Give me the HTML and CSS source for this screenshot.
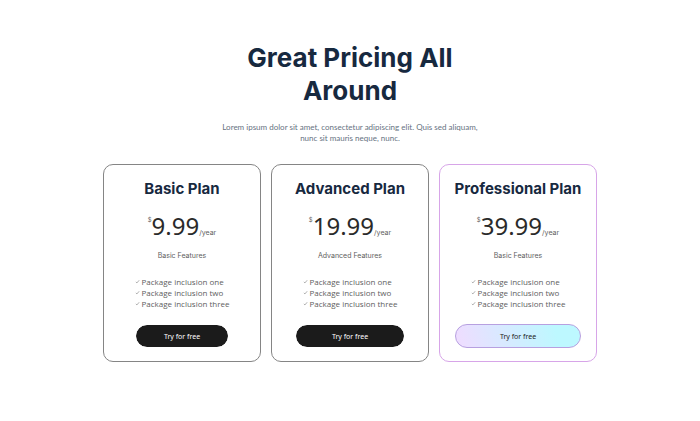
FILE: index.html
```html
<!DOCTYPE html>
<html lang="en">
<head>
<meta charset="utf-8">
<meta name="viewport" content="width=device-width, initial-scale=1">
<title>Pricing</title>
<link rel="stylesheet" href="styles.css">
</head>
<body>
<main class="pricing">
  <header class="intro">
    <h1>Great Pricing All Around</h1>
    <p>Lorem ipsum dolor sit amet, consectetur adipiscing elit. Quis sed aliquam, nunc sit mauris neque, nunc.</p>
  </header>
  <div class="plans">
    <section class="card">
      <div class="plan">
        <h2>Basic Plan</h2>
        <p class="price"><span class="currency">$</span><span class="amount">9.99</span><span class="period">/year</span></p>
        <p class="features">Basic Features</p>
        <ul>
          <li><svg viewBox="0 0 6 6"><path d="M1 3.5 2.3 4.7 5 1.5"/></svg>Package inclusion one</li>
          <li><svg viewBox="0 0 6 6"><path d="M1 3.5 2.3 4.7 5 1.5"/></svg>Package inclusion two</li>
          <li><svg viewBox="0 0 6 6"><path d="M1 3.5 2.3 4.7 5 1.5"/></svg>Package inclusion three</li>
        </ul>
        <button type="button">Try for free</button>
      </div>
    </section>
    <section class="card">
      <div class="plan">
        <h2>Advanced Plan</h2>
        <p class="price"><span class="currency">$</span><span class="amount">19.99</span><span class="period">/year</span></p>
        <p class="features">Advanced Features</p>
        <ul>
          <li><svg viewBox="0 0 6 6"><path d="M1 3.5 2.3 4.7 5 1.5"/></svg>Package inclusion one</li>
          <li><svg viewBox="0 0 6 6"><path d="M1 3.5 2.3 4.7 5 1.5"/></svg>Package inclusion two</li>
          <li><svg viewBox="0 0 6 6"><path d="M1 3.5 2.3 4.7 5 1.5"/></svg>Package inclusion three</li>
        </ul>
        <button type="button">Try for free</button>
      </div>
    </section>
    <section class="card card-pro">
      <div class="plan">
        <h2>Professional Plan</h2>
        <p class="price"><span class="currency">$</span><span class="amount">39.99</span><span class="period">/year</span></p>
        <p class="features">Basic Features</p>
        <ul>
          <li><svg viewBox="0 0 6 6"><path d="M1 3.5 2.3 4.7 5 1.5"/></svg>Package inclusion one</li>
          <li><svg viewBox="0 0 6 6"><path d="M1 3.5 2.3 4.7 5 1.5"/></svg>Package inclusion two</li>
          <li><svg viewBox="0 0 6 6"><path d="M1 3.5 2.3 4.7 5 1.5"/></svg>Package inclusion three</li>
        </ul>
        <button type="button">Try for free</button>
      </div>
    </section>
  </div>
</main>
</body>
</html>
```
FILE: styles.css
```css
* {
  box-sizing: border-box;
}

body {
  margin: 0;
  background: #fff;
  color: #606060;
  font-family: Inter, "Liberation Sans", sans-serif;
}

h1, h2, p, ul {
  margin: 0;
}

.pricing {
  max-width: 494px;
  margin: 0 auto;
  padding: 41px 0 40px;
}

.intro {
  max-width: 270px;
  margin: 0 auto;
  text-align: center;
}

.intro h1 {
  color: #17293f;
  font-size: 26px;
  font-weight: 700;
  line-height: 33px;
}

.intro p {
  margin-top: 15px;
  color: #66727f;
  font-family: Lato, "Open Sans", sans-serif;
  font-size: 8px;
  line-height: 11px;
}

.plans {
  display: grid;
  grid-template-columns: repeat(3, minmax(0, 1fr));
  gap: 10px;
  margin-top: 20px;
}

.card {
  display: flex;
  justify-content: center;
  padding: 13px 0;
  border: 1px solid #858585;
  border-radius: 10px;
}

.plan {
  display: flex;
  flex-direction: column;
  text-align: center;
}

.plan h2 {
  color: #17293f;
  font-size: 15px;
  font-weight: 700;
  line-height: 22px;
}

.price {
  display: flex;
  justify-content: center;
  margin-top: 8px;
  line-height: 36px;
}

.currency {
  margin-top: 8px;
  font-size: 6px;
  line-height: 8px;
}

.amount {
  color: #2a2a2a;
  font-family: "Noto Sans", "Open Sans", sans-serif;
  font-size: 24px;
}

.period {
  align-self: flex-end;
  margin-bottom: 7px;
  font-size: 7px;
  line-height: 8px;
}

.features {
  margin-top: 6px;
  font-size: 7px;
  line-height: 12px;
}

.plan ul {
  align-self: center;
  margin-top: 14px;
  padding: 0;
  list-style: none;
  font-family: "Open Sans", "Noto Sans", sans-serif;
  font-size: 8px;
  line-height: 11px;
}

.plan li {
  display: flex;
  align-items: center;
  gap: 2px;
}

.plan li svg {
  width: 5px;
  height: 5px;
  fill: none;
  stroke: #777;
  stroke-width: 0.7;
}

.plan button {
  height: 24px;
  margin-top: 15px;
  padding: 0;
  border: 1px solid #fff;
  border-radius: 12px;
  background: #1b1b1b;
  background-clip: padding-box;
  color: #fff;
  font-family: "Noto Sans", "Open Sans", sans-serif;
  font-size: 7px;
}

.card-pro {
  border-color: #d7a5e8;
}

.card-pro button {
  border-color: #b7a0e0;
  background: linear-gradient(75deg, #f0dcff, #bdf8ff 80%);
  color: #222;
}
```
